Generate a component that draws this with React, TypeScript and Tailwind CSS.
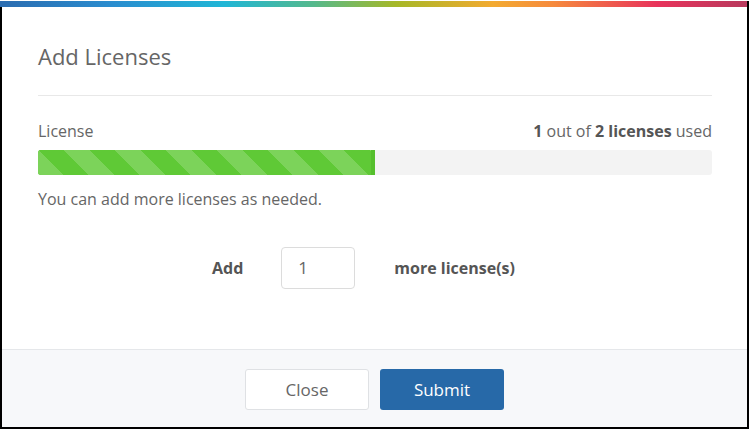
import React from "react";

export default function App() {
  const used = 1;
  const total = 2;
  const pct = (used / total) * 100;
  return (
    <div className="w-[751px] h-[429px] bg-white pt-px overflow-hidden" style={{ fontFamily: '"Open Sans", "Liberation Sans", sans-serif' }}>
      <div className="w-[749px] h-[428px] flex flex-col border-x-2 border-b-2 border-black">
        <div className="-ml-[2px] w-[747px] h-[6px] shrink-0 bg-[linear-gradient(90deg,#2b6cb0_0%,#2a8dcf_15%,#20b6d6_30%,#55b98c_42%,#a6b827_53%,#f3aa30_66%,#f68a3c_74%,#e8335b_88%,#b8395d_100%)]" />
        <div className="flex-1 flex flex-col pl-[36px] pr-[35px] text-[#666]">
          <h1 className="mt-[34px] text-[22px] leading-[30px] font-normal text-[#666]">Add Licenses</h1>
          <div className="mt-[24px] h-px bg-[#e8e8e8]" />
          <div className="mt-[25px] flex justify-between text-[16px] leading-[20px]">
            <span>License</span>
            <span>
              <b className="font-bold text-[#555]">1</b> out of <b className="font-bold text-[#555]">2 licenses</b> used
            </span>
          </div>
          <div className="mt-[9px] h-[25px] rounded-[3px] bg-[#f3f3f3] overflow-hidden flex">
            <div
              className="h-full border-r-[4px] border-[#55bf2d] bg-[#5fc936] bg-[repeating-linear-gradient(45deg,#7cd35a_0px,#7cd35a_18px,#5fc936_18px,#5fc936_36px)]"
              style={{ width: `${pct}%` }}
            />
          </div>
          <p className="mt-[14px] text-[16px] leading-[20px]">You can add more licenses as needed.</p>
          <div className="mt-[38px] ml-[174px] flex items-center text-[16px] font-bold text-[#555]">
            <span>Add</span>
            <div className="ml-[38px] w-[74px] h-[42px] border border-[#dcdcdc] rounded-[4px] flex items-center pl-[16px] text-[17px] font-normal text-[#666]">1</div>
            <span className="ml-[39px]">more license(s)</span>
          </div>
        </div>
        <div className="h-[78px] shrink-0 border-t border-[#e5e7ea] bg-[#f7f8fa] flex justify-center pt-[19px] gap-[11px]">
          <button className="w-[124px] h-[41px] bg-white border border-[#dfe1e4] rounded-[3px] text-[17px] text-[#666]">Close</button>
          <button className="w-[124px] h-[41px] bg-[#2769a8] rounded-[3px] text-[17px] text-white">Submit</button>
        </div>
      </div>
    </div>
  );
}
